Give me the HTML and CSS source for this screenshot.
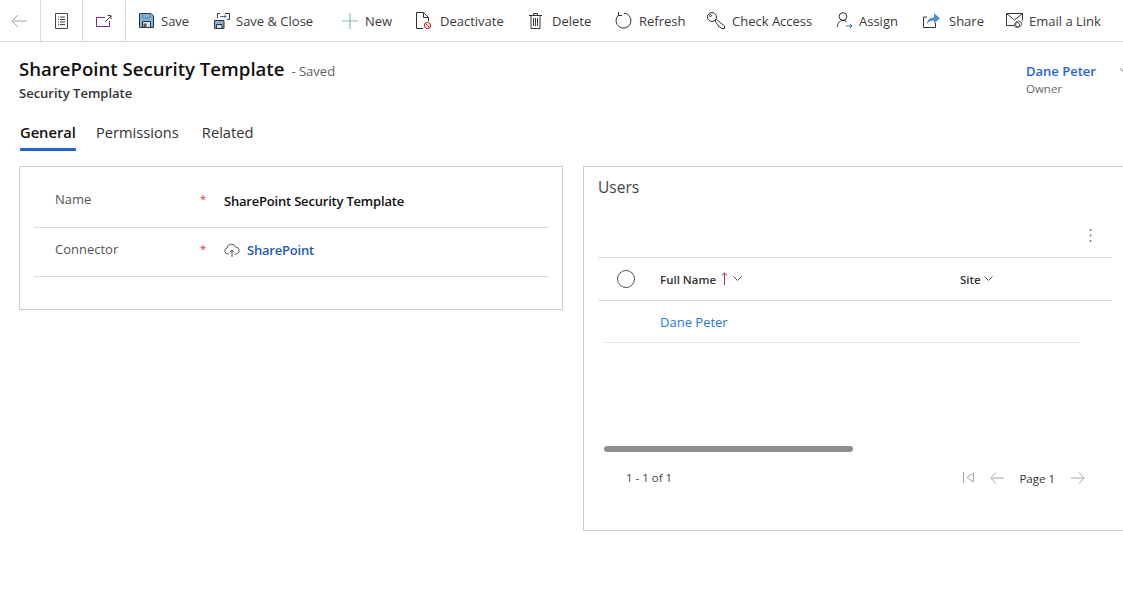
FILE: index.html
```html
<!DOCTYPE html>
<html lang="en">
<head>
  <meta charset="UTF-8">
  <title>SharePoint Security Template</title>
  <link rel="stylesheet" href="styles.css">
</head>
<body>

  <!--command bar-->
  <div class="toolbar">
    <div class="nav-cell back">
      <svg width="16" height="14" viewBox="0 0 16 14"><path d="M7 1 1 7l6 6M1 7h15" fill="none" stroke="#a6a6a6"/></svg>
    </div>
    <div class="nav-cell doc">
      <svg width="13" height="16" viewBox="0 0 13 16"><path d="M.5.500h12v15H.5zM3 4h1M5 4h5M3 6.500h1M5 6.500h5M3 9h1M5 9h5M3 11.500h1M5 11.500h5" fill="none" stroke="#444"/></svg>
    </div>
    <div class="nav-cell popout">
      <svg width="16" height="12" viewBox="0 0 16 12"><path d="M9 2.500H.5v9h13V6" fill="none" stroke="#7a2c80"/><path d="M9.500 6.500 15 1M11.500.5h3.500V4" fill="none" stroke="#444"/></svg>
    </div>
    <div class="commands">
      <div class="cmd save">
        <svg width="15" height="15" viewBox="0 0 15 15"><path d="M.5.500h11.500l2.500 2.500v11.500H.5z" fill="#7db3e0" stroke="#333"/><path d="M3.500 8.500h8v6h-8z" fill="#ddd" stroke="#333"/><path d="M4.500 10.500h3v4h-3z" fill="#555"/><path d="M3.500.5v4.500h7.500V.5" fill="none" stroke="#5f7f9c"/></svg>
        <span>Save</span>
      </div>
      <div class="cmd save-close">
        <svg width="16" height="16" viewBox="0 0 16 16"><path d="M.5 7.500h9.500v8H.5z" fill="#7db3e0" stroke="#333"/><path d="M2.500 11.500h5.500v4H2.500z" fill="#ddd" stroke="#333"/><path d="M3.500 5V.5h2.500M11 .5h4.500v6H13" fill="none" stroke="#333"/><path d="M6 3.500h6M10 1.500l2 2-2 2" fill="none" stroke="#2b6fc4"/></svg>
        <span>Save &amp; Close</span>
      </div>
      <div class="cmd new">
        <svg width="16" height="16" viewBox="0 0 16 16"><path d="M8 0v16M0 8h16" stroke="#7cc8a0" stroke-width="1.200"/></svg>
        <span>New</span>
      </div>
      <div class="cmd deactivate">
        <svg width="15" height="17" viewBox="0 0 15 17"><path d="M7 16.500H.5V.5h7l5 5v4M7.500.5v5h5" fill="none" stroke="#333"/><circle cx="11.500" cy="13.500" r="3" fill="#fff" stroke="#d13438" stroke-width="1.200"/><path d="m9.500 11.500 4 4" stroke="#d13438"/></svg>
        <span>Deactivate</span>
      </div>
      <div class="cmd delete">
        <svg width="13" height="16" viewBox="0 0 13 16"><path d="M0 2.500h13M4.500 2.500V.5h4v2M2 2.500v13h9v-13M4.500 5v8M6.500 5v8M8.500 5v8" fill="none" stroke="#333"/></svg>
        <span>Delete</span>
      </div>
      <div class="cmd refresh">
        <svg width="17" height="17" viewBox="0 0 17 17"><path d="M9 1.100A7.500 7.500 0 1 1 3.500 3M3.500 0v3.500H7" fill="none" stroke="#333"/></svg>
        <span>Refresh</span>
      </div>
      <div class="cmd access">
        <svg width="18" height="17" viewBox="0 0 18 17"><circle cx="5" cy="5" r="4.500" fill="none" stroke="#333"/><circle cx="3.500" cy="3.500" r="1" fill="none" stroke="#333"/><path d="M8 9l1.500-1.500 8 6.500v2.500h-3L13 15l-1.500-.5L11 13z" fill="none" stroke="#333"/></svg>
        <span>Check Access</span>
      </div>
      <div class="cmd assign">
        <svg width="16" height="17" viewBox="0 0 16 17"><circle cx="6" cy="4.500" r="3.800" fill="none" stroke="#333"/><path d="M.5 15c0-4 2-6.500 5.500-6.500 1.500 0 2.500.3 3.500 1" fill="none" stroke="#333"/><path d="M9 14h6M13 12l2 2-2 2" fill="none" stroke="#2b6fc4"/></svg>
        <span>Assign</span>
      </div>
      <div class="cmd share">
        <svg width="17" height="16" viewBox="0 0 17 16"><path d="M4 4H.5v10.500h12V10" fill="none" stroke="#333"/><path d="M4 11c0-4 3-6.500 7-6.500V0l6 5.500-6 5V7.500c-3 0-5.500 1-7 3.500z" fill="#4f8fd1"/></svg>
        <span>Share</span>
      </div>
      <div class="cmd email">
        <svg width="17" height="15" viewBox="0 0 17 15"><path d="M8 12.500H.5V.5h16v7M.5.500 8.500 7l8-6.500" fill="none" stroke="#333"/><circle cx="12.500" cy="11" r="3" fill="#fff" stroke="#555"/><circle cx="11" cy="12" r="2.500" fill="none" stroke="#555"/></svg>
        <span>Email a Link</span>
      </div>
    </div>
  </div>

  <!--record header-->
  <div class="header">
    <div>
      <div class="title-row">
        <h1>SharePoint Security Template</h1>
        <span class="saved">- Saved</span>
      </div>
      <div class="entity">Security Template</div>
    </div>
    <div class="owner">
      <div class="owner-name">
        <a href="#">Dane Peter</a>
        <svg width="9" height="6" viewBox="0 0 9 6"><path d="m.5.500 4 4 4-4" fill="none" stroke="#444"/></svg>
      </div>
      <div class="owner-label">Owner</div>
    </div>
  </div>

  <!--tabs-->
  <div class="tabs">
    <div class="tab active">General</div>
    <div class="tab">Permissions</div>
    <div class="tab related">Related</div>
  </div>

  <div class="content">

    <div class="card fields">
      <div class="field name-field">
        <div class="field-label">Name</div>
        <div class="required">*</div>
        <div class="field-value">SharePoint Security Template</div>
      </div>
      <div class="field connector-field">
        <div class="field-label">Connector</div>
        <div class="required">*</div>
        <div class="field-value lookup">
          <svg width="16" height="14" viewBox="0 0 16 14"><path d="M5 11H3.500a3 3 0 0 1-.5-5.900 4.500 4.500 0 0 1 8.700-1A3.500 3.500 0 0 1 12.500 11H11" fill="none" stroke="#555"/><path d="M8 14V7M5.800 9.200 8 7l2.200 2.200" fill="none" stroke="#555"/></svg>
          <a href="#">SharePoint</a>
        </div>
      </div>
    </div>

    <div class="card users">
      <div class="users-title">Users</div>
      <div class="grid-actions">
        <svg width="3" height="13" viewBox="0 0 3 13"><path d="M1.500 0v2M1.500 5.500v2M1.500 11v2" stroke="#8a6d5a" stroke-width="1.500"/></svg>
      </div>
      <div class="grid-head">
        <div class="select-col"><span class="radio"></span></div>
        <div class="col-name">
          <span>Full Name</span>
          <svg class="sort" width="7" height="13" viewBox="0 0 7 13"><path d="M3.500 13V1M.8 3.500 3.500 1l2.700 2.500" fill="none" stroke="#a4385a"/></svg>
          <svg width="9" height="6" viewBox="0 0 9 6"><path d="m.5.500 4 4 4-4" fill="none" stroke="#555"/></svg>
        </div>
        <div class="col-site">
          <span>Site</span>
          <svg width="9" height="6" viewBox="0 0 9 6"><path d="m.5.500 4 4 4-4" fill="none" stroke="#555"/></svg>
        </div>
      </div>
      <div class="grid-row">
        <a href="#">Dane Peter</a>
      </div>
      <div class="scrollbar"></div>
      <div class="pager">
        <div class="count">1 - 1 of 1</div>
        <div class="pages">
          <svg width="11" height="11" viewBox="0 0 11 11"><path d="M.5 0v11M10.500 1 4 5.500l6.500 4.500z" fill="none" stroke="#a6a6a6"/></svg>
          <svg class="arrow-prev" width="14" height="12" viewBox="0 0 14 12"><path d="M6 .5.800 6 6 11.500M1 6h13" fill="none" stroke="#a6a6a6"/></svg>
          <span class="page-no">Page 1</span>
          <svg width="14" height="12" viewBox="0 0 14 12"><path d="M8 .5 13.200 6 8 11.500M13 6H0" fill="none" stroke="#a6a6a6"/></svg>
        </div>
      </div>
    </div>

  </div>

</body>
</html>
```

FILE: styles.css
```css
html, body {
  height: 100%;
  margin: 0;
  overflow: hidden;
}
body {
  background: #fff;
  color: #333;
  font-family: "Open Sans", "Noto Sans", sans-serif;
  font-size: 13px;
}
a {
  color: #1160b7;
  text-decoration: none;
}

/*command bar*/
.toolbar {
  border-bottom: 1px solid #d8d8d8;
  display: flex;
  height: 41px;
}
.nav-cell {
  align-items: center;
  border-right: 1px solid #d8d8d8;
  box-sizing: border-box;
  display: flex;
  justify-content: center;
}
.nav-cell.back { padding-right: 2px; width: 41px; }
.nav-cell.doc { width: 42px; }
.nav-cell.popout { width: 43px; }
.commands {
  display: flex;
  padding-left: 13px;
}
.cmd {
  align-items: center;
  color: #3b3a39;
  display: flex;
  white-space: nowrap;
}
.cmd span { font-size: 13px; }
.cmd.save { width: 75px; }
.cmd.save span { margin-left: 7px; }
.cmd.save-close { width: 128px; }
.cmd.save-close span { margin-left: 6px; }
.cmd.new { width: 74px; }
.cmd.new span { margin-left: 7px; }
.cmd.deactivate { width: 113px; }
.cmd.deactivate span { margin-left: 9px; }
.cmd.delete { width: 86px; }
.cmd.delete span { margin-left: 10px; }
.cmd.refresh { width: 92px; }
.cmd.refresh span { margin-left: 7px; }
.cmd.access { width: 130px; }
.cmd.access span { margin-left: 7px; }
.cmd.assign { width: 86px; }
.cmd.assign span { margin-left: 6px; }
.cmd.share { width: 83px; }
.cmd.share span { margin-left: 9px; }
.cmd.email span { margin-left: 6px; }

/*header*/
.header {
  display: flex;
  justify-content: space-between;
  padding: 14px 0 0 19px;
}
.title-row {
  align-items: baseline;
  display: flex;
  height: 25px;
}
h1 {
  color: #111;
  font-size: 18.600px;
  font-weight: 600;
  line-height: 25px;
  margin: 0;
}
.saved {
  color: #605e5c;
  font-size: 13px;
  margin-left: 7px;
}
.entity {
  color: #333;
  font-size: 13px;
  font-weight: 600;
  line-height: 18px;
  margin-top: 3px;
}
.owner {
  margin-right: -5px;
  width: 102px;
}
.owner-name {
  align-items: center;
  display: flex;
  gap: 24px;
  height: 20px;
  margin-top: 5px;
}
.owner-name a {
  color: #1b63e0;
  font-size: 13px;
  font-weight: 600;
  white-space: nowrap;
}
.owner-label {
  color: #666;
  font-size: 11.500px;
  line-height: 16px;
}

/*tabs*/
.tabs {
  display: flex;
  gap: 20px;
  margin-top: 20px;
  padding-left: 20px;
}
.tab {
  color: #333;
  font-size: 14.700px;
  height: 26px;
  line-height: 20px;
}
.tab.related { margin-left: 3px; }
.tab.active {
  border-bottom: 3px solid #1b63e0;
  border-radius: 1px;
  color: #111;
  font-weight: 600;
}

/*cards*/
.content {
  align-items: flex-start;
  display: flex;
  gap: 20px;
  margin-top: 15px;
  padding-left: 19px;
}
.card {
  background: #fff;
  border: 1px solid #ccc;
  box-sizing: border-box;
  flex: none;
}
.fields {
  height: 144px;
  padding: 10px 14px 0;
  width: 544px;
}
.field {
  align-items: center;
  border-bottom: 1px solid #d8d8d8;
  display: flex;
  height: 50px;
}
.connector-field { height: 48px; }
.field-label {
  color: #555;
  font-size: 13px;
  margin-left: 21px;
  margin-top: -7px;
  width: 145px;
}
.required {
  color: #d13438;
  font-size: 11px;
  margin-top: -7px;
  width: 24px;
}
.field-value {
  color: #111;
  font-size: 13px;
  font-weight: 600;
  letter-spacing: -0.2px;
  margin-top: -2px;
}
.connector-field .field-label { margin-top: -6px; }
.connector-field .field-value { margin-top: -4px; }
.lookup {
  align-items: center;
  display: flex;
  gap: 7px;
}
.lookup a { color: #1e5bb8; }

.users {
  height: 365px;
  padding: 0 0 0 14px;
  width: 560px;
}
.users-title {
  color: #444;
  font-size: 15.500px;
  line-height: 22px;
  margin-top: 9px;
}
.grid-actions {
  align-items: center;
  display: flex;
  height: 43px;
  justify-content: flex-end;
  margin-right: 50px;
  margin-top: 15px;
}
.grid-actions svg { margin-top: 2px; }
.grid-head {
  align-items: center;
  border-bottom: 1px solid #d8d8d8;
  border-top: 1px solid #d8d8d8;
  display: flex;
  height: 42px;
  margin-right: 30px;
  margin-top: 1px;
}
.select-col {
  align-items: center;
  box-sizing: border-box;
  display: flex;
  justify-content: center;
  padding-right: 6px;
  width: 62px;
}
.radio {
  border: 1px solid #555;
  border-radius: 50%;
  display: block;
  height: 16px;
  width: 16px;
}
.col-name, .col-site {
  align-items: center;
  color: #333;
  display: flex;
  font-size: 11.500px;
  font-weight: 600;
  gap: 5px;
}
.col-site { gap: 3px; }
.col-name { width: 300px; }
.sort { margin-top: -2px; }
.grid-row {
  align-items: center;
  border-bottom: 1px solid #e4e4e4;
  display: flex;
  height: 41px;
  margin-left: 6px;
  margin-right: 62px;
  padding-left: 56px;
}
.grid-row a {
  color: #1d7ad6;
  font-size: 13px;
}
.scrollbar {
  background: #8e8e8e;
  border-radius: 3px;
  height: 6px;
  margin-left: 6px;
  margin-top: 103px;
  width: 249px;
}
.pager {
  align-items: center;
  display: flex;
  justify-content: space-between;
  margin-right: 57px;
  margin-top: 17px;
  padding-left: 28px;
}
.count {
  color: #444;
  font-size: 11.500px;
}
.pages {
  align-items: center;
  display: flex;
}
.arrow-prev { margin-left: 16px; }
.page-no {
  color: #333;
  font-size: 11.500px;
  margin: 2px 16px 0 15px;
}
```
